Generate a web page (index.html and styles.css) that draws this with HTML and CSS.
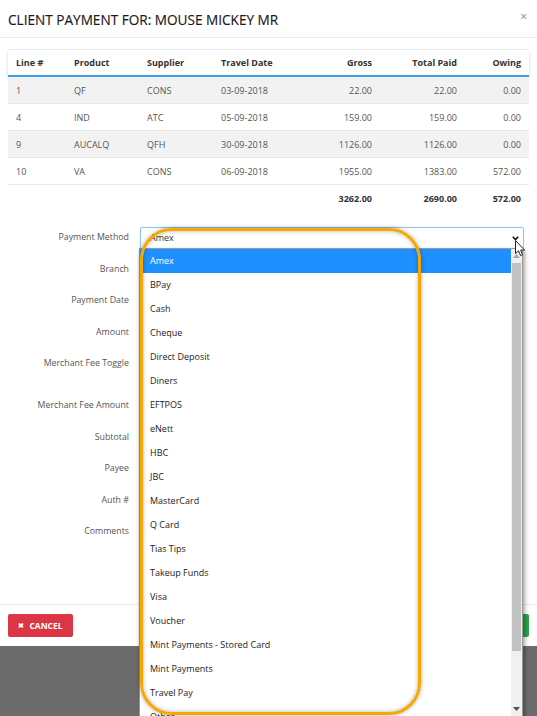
FILE: index.html
```html
<!DOCTYPE html>
<html>
<head>
<meta charset="utf-8">
<link rel="stylesheet" href="styles.css">
</head>
<body>
<div class="modal">
  <div class="modal-header">
    <h4 class="modal-title">CLIENT PAYMENT FOR: MOUSE MICKEY MR</h4>
    <span class="close">×</span>
  </div>
  <div class="modal-body">
    <table class="lines">
      <colgroup>
        <col class="c-line"><col class="c-prod"><col class="c-supp"><col class="c-date"><col class="c-gross"><col class="c-paid"><col class="c-owing">
      </colgroup>
      <thead>
        <tr><th>Line #</th><th>Product</th><th>Supplier</th><th>Travel Date</th><th class="num">Gross</th><th class="num">Total Paid</th><th class="num">Owing</th></tr>
      </thead>
      <tbody>
        <tr class="odd"><td>1</td><td>QF</td><td>CONS</td><td>03-09-2018</td><td class="num">22.00</td><td class="num">22.00</td><td class="num">0.00</td></tr>
        <tr><td>4</td><td>IND</td><td>ATC</td><td>05-09-2018</td><td class="num">159.00</td><td class="num">159.00</td><td class="num">0.00</td></tr>
        <tr class="odd"><td>9</td><td>AUCALQ</td><td>QFH</td><td>30-09-2018</td><td class="num">1126.00</td><td class="num">1126.00</td><td class="num">0.00</td></tr>
        <tr><td>10</td><td>VA</td><td>CONS</td><td>06-09-2018</td><td class="num">1955.00</td><td class="num">1383.00</td><td class="num">572.00</td></tr>
        <tr class="total"><td></td><td></td><td></td><td></td><td class="num">3262.00</td><td class="num">2690.00</td><td class="num">572.00</td></tr>
      </tbody>
    </table>

    <div class="form">
      <div class="form-row"><label>Payment Method</label>
        <div class="select">Amex
          <svg class="chev" width="7" height="5" viewBox="0 0 7 5"><path d="M0.8 0.8 L3.5 3.6 L6.2 0.8" fill="none" stroke="#111" stroke-width="1.6"/></svg>
        </div>
      </div>
      <div class="form-row"><label>Branch</label><div class="control"></div></div>
      <div class="form-row"><label>Payment Date</label><div class="control"></div></div>
      <div class="form-row"><label>Amount</label><div class="control"></div></div>
      <div class="form-row tall"><label>Merchant Fee Toggle</label><div class="control"></div></div>
      <div class="form-row"><label>Merchant Fee Amount</label><div class="control"></div></div>
      <div class="form-row"><label>Subtotal</label><div class="control"></div></div>
      <div class="form-row"><label>Payee</label><div class="control"></div></div>
      <div class="form-row"><label>Auth #</label><div class="control"></div></div>
      <div class="form-row"><label>Comments</label><div class="control textarea"></div></div>
    </div>
  </div>
  <div class="modal-footer">
    <button class="btn btn-cancel"><span class="x">✖</span>CANCEL</button>
    <button class="btn btn-save">✔ SAVE</button>
  </div>
</div>

<div class="dropdown">
  <ul class="options">
    <li class="active">Amex</li>
    <li>BPay</li>
    <li>Cash</li>
    <li>Cheque</li>
    <li>Direct Deposit</li>
    <li>Diners</li>
    <li>EFTPOS</li>
    <li>eNett</li>
    <li>HBC</li>
    <li>JBC</li>
    <li>MasterCard</li>
    <li>Q Card</li>
    <li>Tias Tips</li>
    <li>Takeup Funds</li>
    <li>Visa</li>
    <li>Voucher</li>
    <li>Mint Payments - Stored Card</li>
    <li>Mint Payments</li>
    <li>Travel Pay</li>
    <li>Other</li>
  </ul>
  <div class="scrollbar">
    <svg class="arrow-up" width="7" height="4" viewBox="0 0 7 4"><path d="M0 4 L3.5 0 L7 4 Z" fill="#a8a8a8"/></svg>
    <div class="thumb"></div>
    <svg class="arrow-down" width="7" height="4" viewBox="0 0 7 4"><path d="M0 0 L3.5 4 L7 0 Z" fill="#505050"/></svg>
  </div>
</div>

<div class="highlight-ring"></div>

<svg class="cursor" width="11" height="17" viewBox="0 0 11 17">
  <path d="M0.5 0.5 L0.5 13.5 L3.5 10.8 L5.6 15.6 L7.6 14.7 L5.6 10.1 L9.6 10.1 Z" fill="#fff" stroke="#222" stroke-width="1" stroke-linejoin="round"/>
</svg>
</body>
</html>
```

FILE: styles.css
```css
html, body {
  margin: 0;
  padding: 0;
}
body {
  width: 537px;
  height: 716px;
  overflow: hidden;
  background: #6c6c6c;
  font-family: "Open Sans", "Noto Sans", sans-serif;
  color: #333;
  position: relative;
}
.modal {
  background: #fff;
  width: 537px;
  height: 646px;
  display: flex;
  flex-direction: column;
}
.modal-header {
  height: 38px;
  box-sizing: border-box;
  border-bottom: 1px solid #e9ecef;
  display: flex;
  align-items: center;
  justify-content: space-between;
  padding: 2px 10px 0 8px;
}
.modal-title {
  margin: 0;
  font-size: 13.6px;
  font-weight: 400;
  color: #1a1a1a;
  -webkit-text-stroke: 0.15px #1a1a1a;
}
.close {
  font-size: 12px;
  color: #8a8a8a;
  margin-top: -6px;
}
.modal-body {
  flex: 1;
  padding: 11px 8px 0 8px;
}
.lines {
  width: 521px;
  border-collapse: collapse;
  table-layout: fixed;
  font-size: 9px;
  border-top: 1px solid #e6eaf0;
}
.c-line { width: 58px; }
.c-prod { width: 73px; }
.c-supp { width: 74px; }
.c-date { width: 82px; }
.c-gross { width: 85px; }
.c-paid { width: 85px; }
.c-owing { width: 64px; }
.lines th {
  height: 25px;
  padding: 0 8px;
  text-align: left;
  font-weight: 700;
  color: #333;
  border-bottom: 2px solid #3aa0e6;
}
.lines thead tr {
  box-shadow: 0 2px 3px rgba(0, 0, 0, 0.18);
}
.lines td {
  height: 26px;
  padding: 0 8px;
  color: #555;
  border-top: 1px solid #e8e8e8;
}
.lines tr.odd td {
  background: #f2f2f2;
}
.lines .num {
  text-align: right;
}
.lines tr.total td {
  font-weight: 700;
  color: #333;
}
.form {
  margin-top: 16px;
  font-size: 8.8px;
  color: #555;
}
.form-row {
  display: grid;
  grid-template-columns: 121px 384px;
  column-gap: 11px;
  margin-bottom: 10px;
}
.form-row label {
  text-align: right;
  line-height: 21.5px;
}
.form-row.tall {
  height: 32px;
}
.control {
  height: 21.5px;
}
.control.textarea {
  height: 58px;
}
.select {
  height: 21.5px;
  box-sizing: border-box;
  border: 1px solid #8fc3f5;
  border-radius: 2px;
  padding-left: 9px;
  line-height: 19.5px;
  font-size: 9px;
  color: #333;
  position: relative;
  box-shadow: 0 0 1px rgba(80, 150, 230, 0.4);
}
.chev {
  position: absolute;
  right: 4px;
  top: 8px;
}
.modal-footer {
  height: 42px;
  box-sizing: border-box;
  border-top: 1px solid #e9ecef;
  display: flex;
  align-items: center;
  justify-content: space-between;
  padding: 0 8px;
}
.btn {
  height: 23px;
  border: none;
  border-radius: 2px;
  font-family: "Open Sans", "Noto Sans", sans-serif;
  font-size: 8.5px;
  font-weight: 700;
  color: #fff;
  padding: 0;
  display: flex;
  align-items: center;
  justify-content: center;
}
.btn-cancel {
  width: 65px;
  background: #dc3545;
}
.btn-cancel .x {
  font-size: 7px;
  margin-right: 5px;
}
.btn-save {
  width: 70px;
  background: #28a745;
}
.dropdown {
  position: absolute;
  left: 139px;
  top: 247.5px;
  width: 384px;
  height: 470px;
  box-sizing: border-box;
  background: #fff;
  border: 1px solid #9a9a9a;
  box-shadow: 2px 2px 4px rgba(0, 0, 0, 0.35);
  display: flex;
  overflow: hidden;
  z-index: 5;
}
.options {
  list-style: none;
  margin: 0;
  padding: 0;
  flex: 1;
  font-size: 9px;
  color: #222;
}
.options li {
  height: 24px;
  box-sizing: border-box;
  padding-top: 1.5px;
  line-height: 22.5px;
  padding-left: 10px;
}
.options li.active {
  background: #1e90ff;
  color: #fff;
}
.scrollbar {
  width: 11px;
  background: #f0f0f0;
  position: relative;
}
.thumb {
  position: absolute;
  left: 1px;
  top: 14px;
  width: 9px;
  height: 388px;
  background: #c1c1c1;
}
.arrow-up {
  position: absolute;
  left: 2px;
  top: 5px;
}
.arrow-down {
  position: absolute;
  left: 2px;
  bottom: 6px;
}
.highlight-ring {
  position: absolute;
  left: 139.5px;
  top: 227.5px;
  width: 281.5px;
  height: 487px;
  box-sizing: border-box;
  border: 3px solid #f5a800;
  border-radius: 32px;
  box-shadow: 0 0 4px rgba(0, 0, 0, 0.35), inset 0 0 4px rgba(0, 0, 0, 0.3);
  z-index: 6;
}
.cursor {
  position: absolute;
  left: 515px;
  top: 240px;
  z-index: 7;
}
```
